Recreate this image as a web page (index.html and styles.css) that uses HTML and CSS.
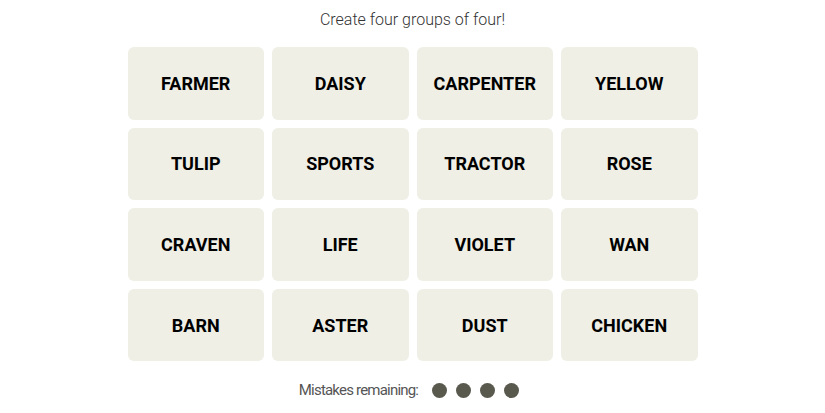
FILE: index.html
```html
<!DOCTYPE html>
<html lang="en">
<head>
  <meta charset="UTF-8">
  <title>Connections</title>
  <link rel="stylesheet" href="styles.css">
</head>
<body>
  <main class="game">
    <p class="prompt">Create four groups of four!</p>

    <!-- board -->
    <div class="board">
      <button class="tile">FARMER</button>
      <button class="tile">DAISY</button>
      <button class="tile">CARPENTER</button>
      <button class="tile">YELLOW</button>
      <button class="tile">TULIP</button>
      <button class="tile">SPORTS</button>
      <button class="tile">TRACTOR</button>
      <button class="tile">ROSE</button>
      <button class="tile">CRAVEN</button>
      <button class="tile">LIFE</button>
      <button class="tile">VIOLET</button>
      <button class="tile">WAN</button>
      <button class="tile">BARN</button>
      <button class="tile">ASTER</button>
      <button class="tile">DUST</button>
      <button class="tile">CHICKEN</button>
    </div>

    <div class="mistakes">
      <span>Mistakes remaining:</span>
      <div class="bubbles">
        <span class="bubble"></span>
        <span class="bubble"></span>
        <span class="bubble"></span>
        <span class="bubble"></span>
      </div>
    </div>
  </main>
</body>
</html>
```

FILE: styles.css
```css
* { box-sizing: border-box; margin: 0; padding: 0; }
html, body { background: #fff; font-family: Roboto, "Liberation Sans", sans-serif; }

.game {
  width: 570px;
  margin: 0 auto;
  padding-top: 10px;
  display: flex; flex-direction: column; align-items: center;
}

.prompt {
  font-size: 16px; line-height: 20px;
  color: #333; font-weight: 300;
  margin-bottom: 17px;
}

/* board */
.board {
  width: 100%;
  display: grid;
  grid-template-columns: repeat(4, 1fr);
  grid-auto-rows: 72.6px;
  gap: 8px;
}
.tile {
  border: none; border-radius: 6px;
  background: #efefe6; color: #000;
  font-family: Roboto, "Liberation Sans", sans-serif;
  font-size: 18px; font-weight: 700;
  cursor: pointer;
}

/* mistakes */
.mistakes {
  margin: 19px 7px 0 0;
  display: flex; align-items: center; gap: 14px;
  font-size: 15px; line-height: 20px; color: #555; font-weight: 400;
  letter-spacing: -0.8px;
}
.bubbles { display: flex; gap: 9px; }
.bubble {
  width: 15px; height: 15px; border-radius: 50%;
  background: #5a594e;
}
```
